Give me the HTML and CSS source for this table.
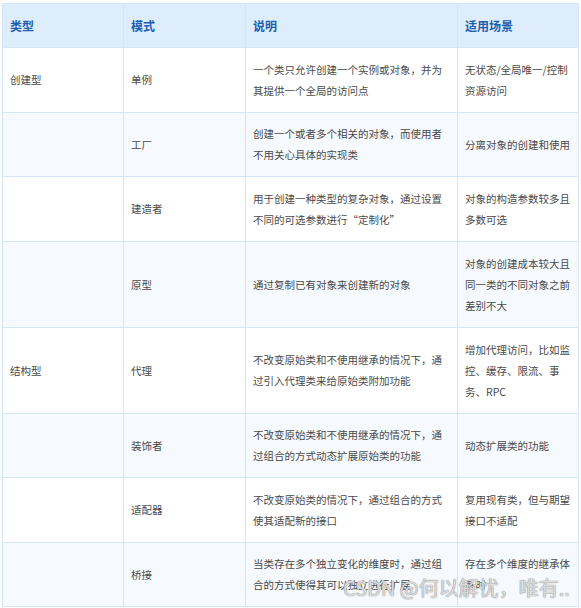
FILE: index.html
```html
<!DOCTYPE html>
<html lang="zh-CN">
<head>
<meta charset="utf-8">
<title>设计模式</title>
<link rel="stylesheet" href="styles.css">
</head>
<body>
<div class="wrap">
<table class="tbl">
  <colgroup>
    <col class="c1"><col class="c2"><col class="c3"><col class="c4">
  </colgroup>
  <thead>
    <tr class="hd"><th>类型</th><th>模式</th><th>说明</th><th>适用场景</th></tr>
  </thead>
  <tbody>
    <tr class="r2"><td>创建型</td><td>单例</td><td>一个类只允许创建一个实例或对象，并为其提供一个全局的访问点</td><td>无状态/全局唯一/控制资源访问</td></tr>
    <tr class="r2 alt"><td></td><td>工厂</td><td>创建一个或者多个相关的对象，而使用者不用关心具体的实现类</td><td>分离对象的创建和使用</td></tr>
    <tr class="r2"><td></td><td>建造者</td><td>用于创建一种类型的复杂对象，通过设置不同的可选参数进行“定制化”</td><td>对象的构造参数较多且多数可选</td></tr>
    <tr class="r3 alt"><td></td><td>原型</td><td>通过复制已有对象来创建新的对象</td><td>对象的创建成本较大且同一类的不同对象之前差别不大</td></tr>
    <tr class="r3"><td>结构型</td><td>代理</td><td>不改变原始类和不使用继承的情况下，通过引入代理类来给原始类附加功能</td><td>增加代理访问，比如监控、缓存、限流、事务、RPC</td></tr>
    <tr class="r2 alt"><td></td><td>装饰者</td><td>不改变原始类和不使用继承的情况下，通过组合的方式动态扩展原始类的功能</td><td>动态扩展类的功能</td></tr>
    <tr class="r2"><td></td><td>适配器</td><td>不改变原始类的情况下，通过组合的方式使其适配新的接口</td><td>复用现有类，但与期望接口不适配</td></tr>
    <tr class="r2 alt"><td></td><td>桥接</td><td>当类存在多个独立变化的维度时，通过组合的方式使得其可以独立进行扩展</td><td>存在多个维度的继承体系时</td></tr>
  </tbody>
</table>
<div class="mark">CSDN @何以解忧，唯有..</div>
</div>
</body>
</html>
```
FILE: styles.css
```css
html, body {
  margin: 0;
  padding: 0;
  background: #ffffff;
}
body {
  font-family: "Noto Sans CJK SC", "Noto Sans", sans-serif;
  overflow: hidden;
  height: 608px;
}
.wrap {
  position: relative;
  padding: 3px 0 0 2px;
}
.tbl {
  border-collapse: collapse;
  table-layout: fixed;
  width: 576px;
  font-size: 10.5px;
  color: #4a4a4a;
}
.c1 { width: 121px; }
.c2 { width: 122px; }
.c3 { width: 212px; }
.c4 { width: 121px; }
.tbl th, .tbl td {
  border: 1px solid #d3e5f7;
  text-align: left;
  vertical-align: middle;
  padding: 8px 7px;
  line-height: 21px;
  word-break: break-all;
}
.tbl th {
  background: #deedfc;
  color: #1d5fae;
  font-weight: 700;
  font-size: 12px;
}
.hd { height: 44px; }
.r2 { height: 64.5px; }
.r3 { height: 86px; }
.tbl tr.alt td {
  background: #f6f9fd;
}
.mark {
  position: absolute;
  left: 343px;
  top: 575px;
  font-size: 20px;
  line-height: 26px;
  white-space: nowrap;
  color: rgba(255, 255, 255, 0.7);
  text-shadow: 0 0 1px #888, 0 0 1px #888;
  font-family: "Noto Sans CJK SC", sans-serif;
}
```
